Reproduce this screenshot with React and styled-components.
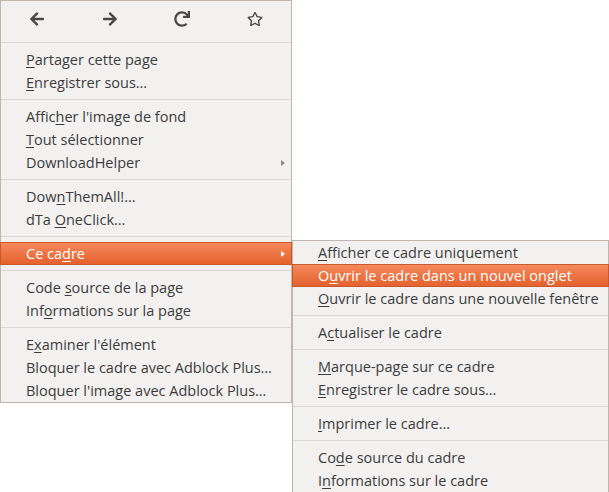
import React from "react";
import styled, { createGlobalStyle, css } from "styled-components";
import { FaArrowLeft, FaArrowRight, FaRedo, FaRegStar } from "react-icons/fa";

const Global = createGlobalStyle`
  html, body { margin: 0; padding: 0; background: #ffffff; }
  body { font-family: "Open Sans", "Noto Sans", sans-serif; }
  * { box-sizing: border-box; }
`;

const Stage = styled.div`
  position: relative;
  width: 609px;
  height: 492px;
  overflow: hidden;
`;

const Menu = styled.div`
  width: ${(p) => p.$width}px;
  background: #f2f1f0;
  border: 1px solid #bfb7ae;
  display: flex;
  flex-direction: column;
`;

const SubMenu = styled(Menu)`
  position: absolute;
  left: ${(p) => p.$left}px;
  top: ${(p) => p.$top}px;
`;

const IconRow = styled.div`
  height: 36px;
  display: grid;
  grid-template-columns: repeat(4, 1fr);
  align-items: center;
  justify-items: center;
  color: #474747;
  padding-top: 0px;
`;

const IconCell = styled.div`
  display: flex;
  align-items: center;
  justify-content: center;
  width: 20px;
  height: 20px;
  font-size: ${(p) => p.$size || 15}px;
`;

const Separator = styled.div`
  height: 11px;
  display: flex;
  align-items: center;
  &::after {
    content: "";
    display: block;
    width: 100%;
    height: 1px;
    background: #dbd7d2;
  }
`;

const Item = styled.div`
  height: 23px;
  display: flex;
  align-items: center;
  justify-content: space-between;
  padding: 0 6px 0 ${(p) => p.$indent}px;
  font-size: 14.5px;
  color: #3c3c3c;
  white-space: nowrap;
  ${(p) =>
    p.$active &&
    css`
      color: #ffffff;
      background: linear-gradient(#f4895a, #e4622f);
      border: 1px solid #c9582d;
      margin: 0 -1px;
      padding-left: ${p.$indent}px;
    `}
`;

const Key = styled.span`
  text-decoration: underline;
  text-underline-offset: 2px;
  text-decoration-thickness: 1px;
`;

const Arrow = styled.span`
  width: 0;
  height: 0;
  border-top: 3px solid transparent;
  border-bottom: 3px solid transparent;
  border-left: 4px solid ${(p) => (p.$active ? "#ffffff" : "#8a8a8a")};
`;

const Label = ({ text, k }) => {
  if (k === undefined || k < 0) return <span>{text}</span>;
  return (
    <span>
      {text.slice(0, k)}
      <Key>{text[k]}</Key>
      {text.slice(k + 1)}
    </span>
  );
};

const mainItems = [
  { t: "Partager cette page", k: 0 },
  { t: "Enregistrer sous…", k: 0 },
  "sep",
  { t: "Afficher l'image de fond", k: 5 },
  { t: "Tout sélectionner", k: 0 },
  { t: "DownloadHelper", sub: true },
  "sep",
  { t: "DownThemAll!…", k: 3 },
  { t: "dTa OneClick…", k: 4 },
  "sep",
  { t: "Ce cadre", k: 5, sub: true, active: true },
  "sep",
  { t: "Code source de la page", k: 5 },
  { t: "Informations sur la page", k: 3 },
  "sep",
  { t: "Examiner l'élément", k: 1 },
  { t: "Bloquer le cadre avec Adblock Plus…" },
  { t: "Bloquer l'image avec Adblock Plus…" },
];

const subItems = [
  { t: "Afficher ce cadre uniquement", k: 0 },
  { t: "Ouvrir le cadre dans un nouvel onglet", k: 1, active: true },
  { t: "Ouvrir le cadre dans une nouvelle fenêtre", k: 0 },
  "sep",
  { t: "Actualiser le cadre", k: 1 },
  "sep",
  { t: "Marque-page sur ce cadre", k: 0 },
  { t: "Enregistrer le cadre sous…", k: 0 },
  "sep",
  { t: "Imprimer le cadre…", k: 0 },
  "sep",
  { t: "Code source du cadre", k: 2 },
  { t: "Informations sur le cadre", k: 1 },
];

const renderItems = (items, indent) =>
  items.map((it, i) =>
    it === "sep" ? (
      <Separator key={i} />
    ) : (
      <Item key={i} $indent={indent} $active={it.active}>
        <Label text={it.t} k={it.k} />
        {it.sub && <Arrow $active={it.active} />}
      </Item>
    )
  );

export default function App() {
  return (
    <Stage>
      <Global />
      <Menu $width={292}>
        <IconRow>
          <IconCell $size={16}>
            <FaArrowLeft />
          </IconCell>
          <IconCell $size={16}>
            <FaArrowRight />
          </IconCell>
          <IconCell $size={16}>
            <FaRedo />
          </IconCell>
          <IconCell $size={16}>
            <FaRegStar />
          </IconCell>
        </IconRow>
        <Separator />
        {renderItems(mainItems, 25)}
      </Menu>
      <SubMenu $width={317} $left={292} $top={240}>
        {renderItems(subItems, 25)}
      </SubMenu>
    </Stage>
  );
}
